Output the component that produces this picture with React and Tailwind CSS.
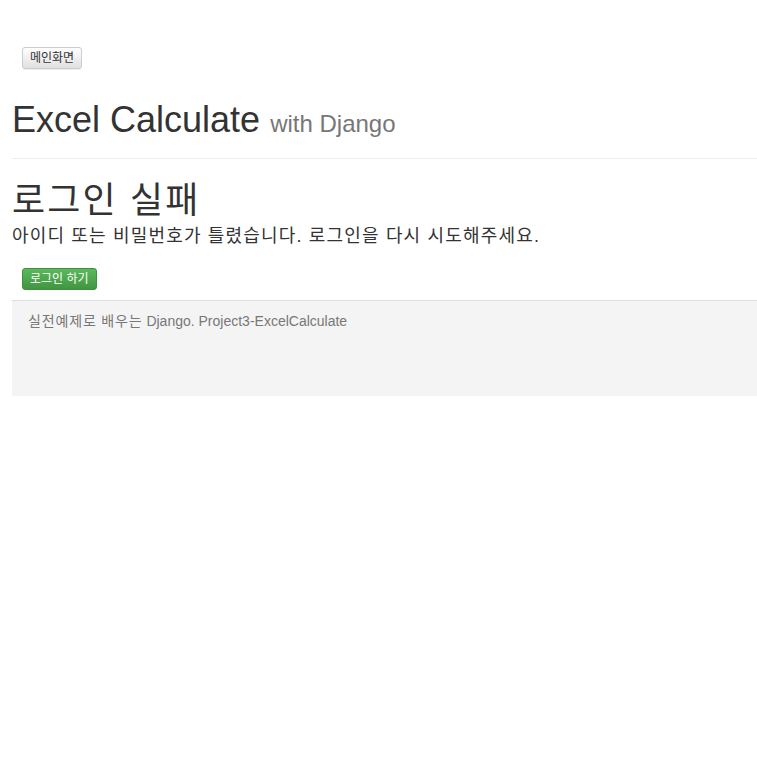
export default function App() {
  return (
    <div className="min-h-screen bg-white pl-3 text-[#333]" style={{ fontFamily: '"Liberation Sans", Arial, "Noto Sans CJK KR", sans-serif' }}>
      <div className="pt-[45px] pl-[10px]">
        <button className="h-[22px] px-[7px] text-[12px] leading-none rounded-[3px] border border-[#ccc] bg-gradient-to-b from-white to-[#e0e0e0] text-[#333] shadow-[inset_0_1px_0_rgba(255,255,255,0.15),0_1px_1px_rgba(0,0,0,0.075)]">
          메인화면
        </button>
      </div>

      <h1 className="mt-[31px] text-[36px] leading-[40px] font-normal">
        Excel Calculate <span className="text-[24px] text-[#777]">with Django</span>
      </h1>

      <hr className="mt-[14px] border-t border-[#eee]" />

      <h2 className="mt-[20px] text-[36px] leading-[44px] font-normal tracking-[0.06em]">로그인 실패</h2>
      <p className="text-[18px] leading-[26px] tracking-[0.065em]">아이디 또는 비밀번호가 틀렸습니다. 로그인을 다시 시도해주세요.</p>

      <div className="pt-[17px] pl-[10px]">
        <button className="h-[22px] px-[7px] text-[12px] leading-none rounded-[3px] border border-[#3e8f3e] bg-gradient-to-b from-[#5cb85c] to-[#419641] text-white">
          로그인 하기
        </button>
      </div>

      <footer className="mt-[10px] h-[96px] border-t border-[#ddd] bg-[#f4f4f4] px-4 pt-[10px] text-[14px] text-[#777]">
        <span className="tracking-[0.06em]">실전예제로 배우는</span> Django. Project3-ExcelCalculate
      </footer>
    </div>
  )
}
